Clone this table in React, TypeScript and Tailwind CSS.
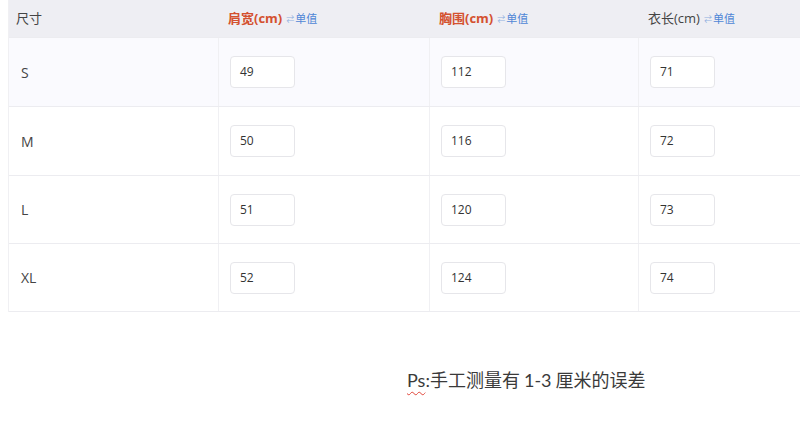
const COLUMNS = [
  { label: '肩宽(cm)', highlight: true },
  { label: '胸围(cm)', highlight: true },
  { label: '衣长(cm)', highlight: false },
] as const

const ROWS = [
  { size: 'S', values: [49, 112, 71], h: 'h-[70px] border-t border-t-[#ececf0] bg-[#fafafe]' },
  { size: 'M', values: [50, 116, 72], h: 'h-[69px]' },
  { size: 'L', values: [51, 120, 73], h: 'h-[68px]' },
  { size: 'XL', values: [52, 124, 74], h: 'h-[68px]' },
] as const

const FONT = { fontFamily: '"Open Sans", "Noto Sans CJK SC", sans-serif' }
const LATIN = { fontFamily: '"Lato", sans-serif' }

function SwapTag() {
  return (
    <span className="ml-1 flex items-center text-[11px] font-normal text-[#4f86d6]" style={{ fontFamily: '"Noto Sans CJK SC", sans-serif' }}>
      <span className="mr-[1px] text-[8px] text-[#8fb0e0]">⇄</span>单值
    </span>
  )
}

export default function App() {
  return (
    <div className="h-[427px] w-[800px] overflow-hidden bg-white text-[#333]" style={FONT}>
      <div className="ml-2 w-[820px] border-l border-[#f0f0f3]">
        <div className="grid h-[37px] grid-cols-[210px_211px_209px_190px] items-center bg-[#eeeef3] text-[13px]">
          <span className="pl-[7px] text-[#444]">尺寸</span>
          {COLUMNS.map((col) => (
            <span key={col.label} className="flex items-center pl-[9px]">
              <span className={col.highlight ? 'font-bold text-[#d4512f]' : 'text-[#444]'}>{col.label}</span>
              <SwapTag />
            </span>
          ))}
        </div>
        {ROWS.map((row) => (
          <div
            key={row.size}
            className={`grid grid-cols-[210px_211px_209px_190px] border-b border-[#ececf0] ${row.h}`}
          >
            <span className="flex items-center border-r border-[#f0f0f3] pl-3 text-[14px] text-[#444]">{row.size}</span>
            {row.values.map((v, j) => (
              <span key={j} className={`flex items-center pl-[11px] ${j < 2 ? 'border-r border-[#f0f0f3]' : ''}`}>
                <span className="flex h-8 w-[65px] items-center rounded-[4px] border border-[#e6e6ea] bg-white pl-[9px] text-[12px] text-[#333]">
                  {v}
                </span>
              </span>
            ))}
          </div>
        ))}
      </div>
      <p className="mt-[54px] pl-[407px] text-[18px] text-[#3a3a3a]" style={{ fontFamily: '"Noto Sans CJK SC", sans-serif' }}>
        <span className="underline decoration-[#e0463a] decoration-wavy decoration-1 underline-offset-4" style={LATIN}>
          Ps
        </span>
        <span style={LATIN}>:</span>
        手工测量有 <span style={LATIN}>1-3</span> 厘米的误差
      </p>
    </div>
  )
}
